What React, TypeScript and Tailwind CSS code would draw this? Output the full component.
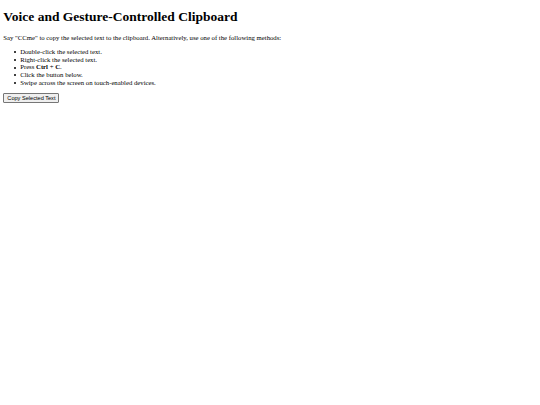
const items: React.ReactNode[] = [
  'Double-click the selected text.',
  'Right-click the selected text.',
  <>
    Press <b>Ctrl</b> + <b>C</b>.
  </>,
  'Click the button below.',
  'Swipe across the screen on touch-enabled devices.',
];

export default function App() {
  return (
    <div className="min-h-[405px] bg-white px-[3.36px] pt-[0.1px] text-[6.72px] leading-[1.15] text-black" style={{ fontFamily: '"Liberation Serif", "Times New Roman", serif' }}>
      <h1 className="my-[9px] text-[13.5px] font-bold leading-[1.15]">Voice and Gesture-Controlled Clipboard</h1>
      <p className="my-[6.72px] text-[6.72px] leading-[1.15]">
        Say "CCme" to copy the selected text to the clipboard. Alternatively, use one of the following methods:
      </p>
      <ul className="my-[6.72px] list-none pl-[16.8px] text-[6.72px] leading-[1.15]">
        {items.map((it, i) => (
          <li key={i} className="relative">
            <span className="absolute left-[-6.6px] top-[3.1px] size-[2px] rounded-full bg-black" />
            {it}
          </li>
        ))}
      </ul>
      <div>
        <button
          className="rounded-[1px] border-[0.6px] border-[#767676] bg-[#efefef] px-[3px] py-[0.6px] text-[5.6px] leading-[1.15] text-black"
          style={{ fontFamily: '"Liberation Sans", Arial, sans-serif' }}
        >
          Copy Selected Text
        </button>
      </div>
    </div>
  );
}
